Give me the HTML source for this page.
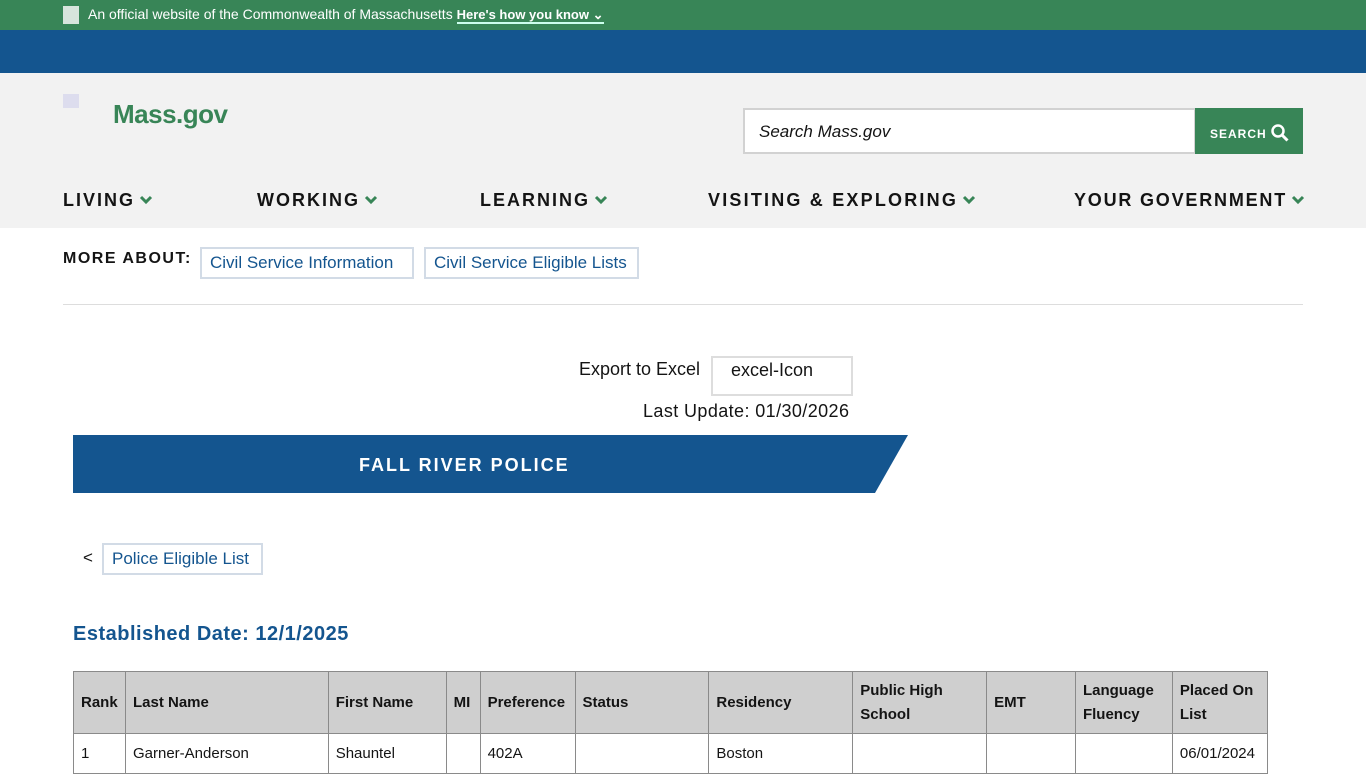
<!DOCTYPE html>
<html><head><meta charset="utf-8"><style>
*{box-sizing:border-box;margin:0;padding:0}
body{width:1366px;height:768px;overflow:hidden;font-family:"Liberation Sans",sans-serif;background:#fff;color:#141414;position:relative}
.a{position:absolute}
.top{top:0;left:0;width:1366px;height:30px;background:#388557;color:#fff;font-size:14px}
.blue{top:30px;left:0;width:1366px;height:43px;background:#14558f}
.hdr{top:73px;left:0;width:1366px;height:155px;background:#f2f2f2}
.nav{font-weight:bold;font-size:18px;letter-spacing:2px;top:190px;color:#141414;white-space:nowrap}
.nav svg{margin-left:4px;vertical-align:1px}
.btn{border:2px solid #d2dbe6;color:#14558f;font-size:17px;padding:0 8px;height:32px;line-height:28px}
table{border-collapse:collapse;font-size:15px}
td,th{border:1px solid #8a8a8a;padding:0 7px;text-align:left}
th{background:#cfcfcf;height:62px;font-weight:bold;line-height:24px}
td{height:40px}
</style></head><body>
<div class="a top"><div class="a" style="left:63px;top:6px;width:16px;height:18px;background:#d7e4dc"></div><span class="a" style="left:88px;top:6px">An official website of the Commonwealth of Massachusetts <b style="font-size:13px;border-bottom:2px solid #cfe;">Here's how you know ⌄</b></span></div>
<div class="a blue"></div>
<div class="a hdr"></div>
<div class="a" style="left:63px;top:94px;width:16px;height:14px;background:#dde"></div>
<div class="a" style="left:113px;top:99px;font-size:26px;font-weight:bold;color:#388557;letter-spacing:-0.5px">Mass.gov</div>
<div class="a" style="left:743px;top:108px;width:453px;height:46px;background:#fff;border:2px solid #d2d2d2;font-style:italic;font-size:17px;padding:12px 14px">Search Mass.gov</div>
<div class="a" style="left:1195px;top:108px;width:108px;height:46px;background:#388557;color:#fff;font-weight:bold;font-size:12px;letter-spacing:1px;padding:16px 0 0 15px;white-space:nowrap">SEARCH <svg width="18" height="18" viewBox="0 0 18 18" style="vertical-align:-4px"><circle cx="7" cy="7" r="5.5" fill="none" stroke="#fff" stroke-width="2.5"/><path d="M11 11l5.5 5.5" stroke="#fff" stroke-width="3"/></svg></div>
<div class="a nav" style="left:63px">LIVING<svg width="14" height="10" viewBox="0 0 14 10"><path d="M2 2l5 5 5-5" fill="none" stroke="#388557" stroke-width="3"/></svg></div>
<div class="a nav" style="left:257px">WORKING<svg width="14" height="10" viewBox="0 0 14 10"><path d="M2 2l5 5 5-5" fill="none" stroke="#388557" stroke-width="3"/></svg></div>
<div class="a nav" style="left:480px">LEARNING<svg width="14" height="10" viewBox="0 0 14 10"><path d="M2 2l5 5 5-5" fill="none" stroke="#388557" stroke-width="3"/></svg></div>
<div class="a nav" style="left:708px;letter-spacing:2.2px">VISITING &amp; EXPLORING<svg width="14" height="10" viewBox="0 0 14 10"><path d="M2 2l5 5 5-5" fill="none" stroke="#388557" stroke-width="3"/></svg></div>
<div class="a nav" style="left:1074px;letter-spacing:1.8px">YOUR GOVERNMENT<svg width="14" height="10" viewBox="0 0 14 10"><path d="M2 2l5 5 5-5" fill="none" stroke="#388557" stroke-width="3"/></svg></div>
<div class="a" style="left:63px;top:250px;font-weight:bold;font-size:16px;letter-spacing:1.5px">MORE ABOUT:</div>
<div class="a btn" style="left:200px;top:247px;width:214px">Civil Service Information</div>
<div class="a btn" style="left:424px;top:247px;width:215px">Civil Service Eligible Lists</div>
<div class="a" style="left:63px;top:304px;width:1240px;height:1px;background:#ddd"></div>
<div class="a" style="left:579px;top:359px;font-size:18px">Export to Excel</div>
<div class="a" style="left:711px;top:356px;width:142px;height:40px;border:2px solid #ddd;font-size:18px;padding:2px 18px">excel-Icon</div>
<div class="a" style="left:643px;top:401px;font-size:18px;letter-spacing:0.4px">Last Update: 01/30/2026</div>
<svg class="a" style="left:73px;top:435px" width="835" height="58"><polygon points="0,0 835,0 802,58 0,58" fill="#14558f"/></svg>
<div class="a" style="left:359px;top:455px;color:#fff;font-weight:bold;font-size:18px;letter-spacing:2px">FALL RIVER POLICE</div>
<div class="a" style="left:83px;top:548px;font-size:17px">&lt;</div>
<div class="a btn" style="left:102px;top:543px;width:161px">Police Eligible List</div>
<div class="a" style="left:73px;top:623px;color:#14558f;font-weight:bold;font-size:20px;letter-spacing:0.5px">Established Date: 12/1/2025</div>
<table class="a" style="left:73px;top:671px;width:1195px">
<tr><th style="width:52px">Rank</th><th style="width:203px">Last Name</th><th style="width:118px">First Name</th><th style="width:34px">MI</th><th style="width:95px">Preference</th><th style="width:134px">Status</th><th style="width:144px">Residency</th><th style="width:134px">Public High School</th><th style="width:89px">EMT</th><th style="width:97px">Language Fluency</th><th style="width:95px">Placed On List</th></tr>
<tr><td>1</td><td>Garner-Anderson</td><td>Shauntel</td><td></td><td>402A</td><td></td><td>Boston</td><td></td><td></td><td></td><td>06/01/2024</td></tr>
</table>
</body></html>
